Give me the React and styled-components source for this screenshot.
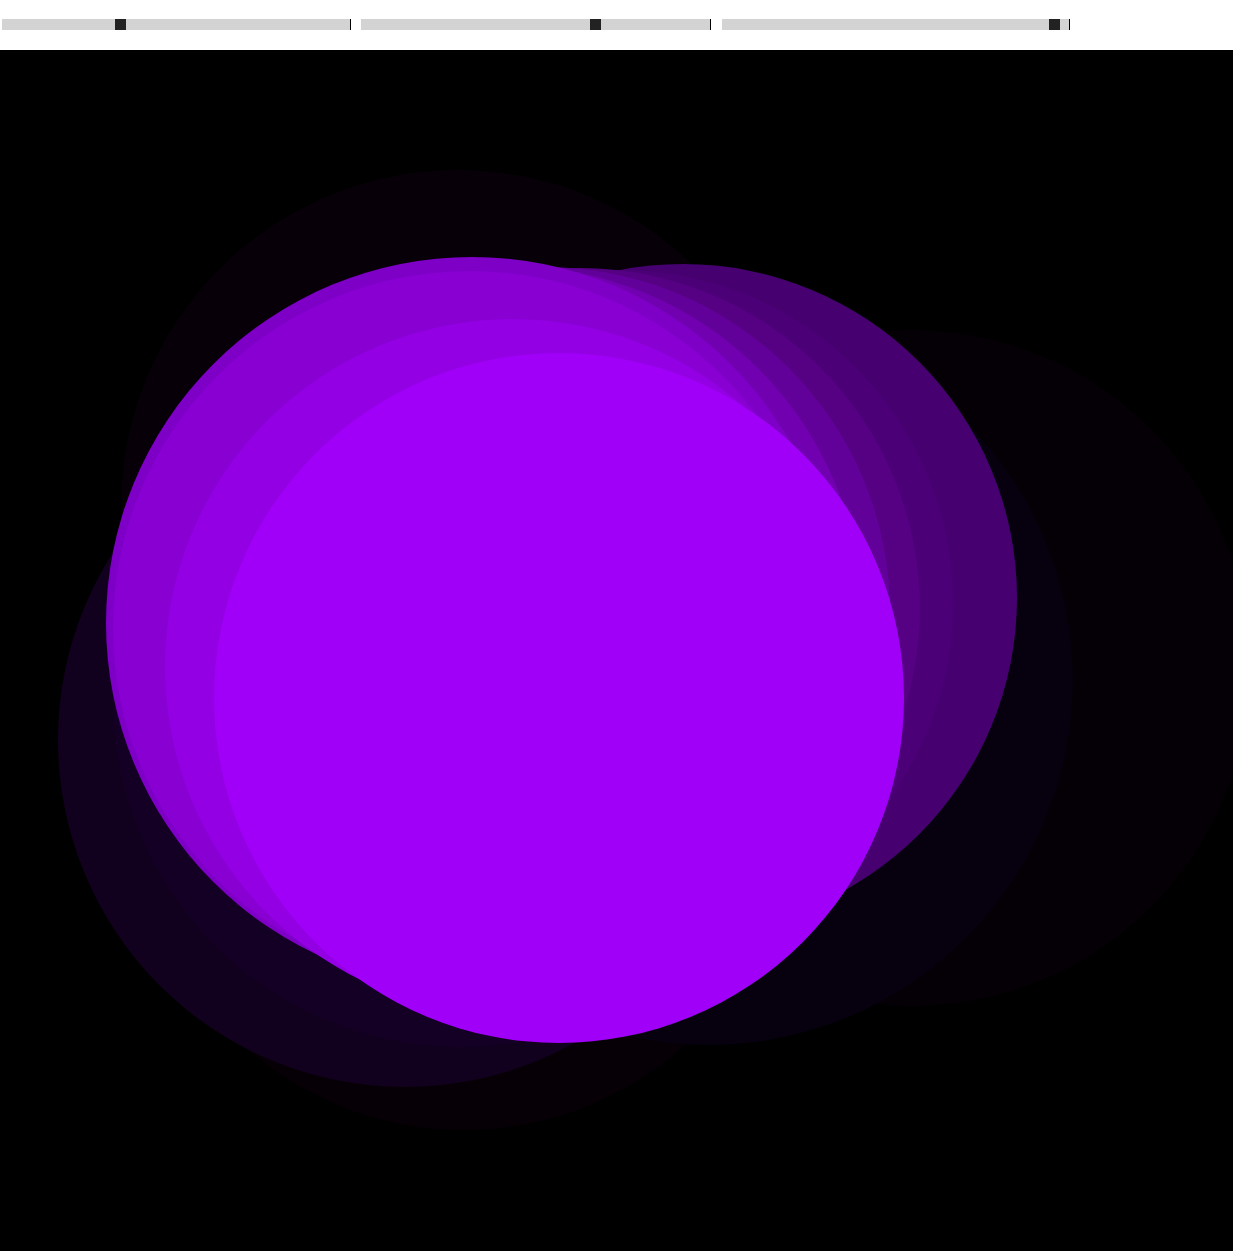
import React from 'react';
import styled, {createGlobalStyle} from 'styled-components';

const GlobalStyle = createGlobalStyle`
  html, body {
    margin: 0;
    padding: 0;
    background: #fff;
    font-family: "Liberation Sans", Arial, sans-serif;
  }
`;

const Page = styled.div`
  display: flex;
  flex-flow: column nowrap;
  width: 1233px;
`;

const Controls = styled.div`
  display: flex;
  align-items: flex-start;
  height: 50px;
  padding: 19px 0 0 2px;
  box-sizing: border-box;
  background: #fff;
`;

const SliderWrap = styled.div`
  display: flex;
  align-items: stretch;
  height: 11px;
  margin-right: ${props => props.gap}px;
`;

const Track = styled.div`
  position: relative;
  width: ${props => props.width}px;
  height: 11px;
  background: #d3d3d3;
`;

const Thumb = styled.div`
  position: absolute;
  top: 0;
  width: 11px;
  height: 11px;
  background: #222;
`;

const EndMark = styled.div`
  width: 1px;
  background: #000;
`;

const Stage = styled.div`
  width: 1233px;
  height: 1201px;
  background: #000;
  overflow: hidden;
  svg {
    display: block;
  }
`;

const sliders = [
  {width: 348, pos: 113, gap: 10},
  {width: 349, pos: 229, gap: 11},
  {width: 347, pos: 327, gap: 0},
];

// back to front; coords relative to the canvas (page y - 50)
const blobs = [
  {cx: 912, cy: 618, r: 338, fill: '#050005'},
  {cx: 464, cy: 750, r: 330, fill: '#060006'},
  {cx: 458, cy: 457, r: 337, fill: '#070008'},
  {cx: 708, cy: 630, r: 365, fill: '#06000f'},
  {cx: 405, cy: 690, r: 347, fill: '#12001f'},
  {cx: 460, cy: 650, r: 347, fill: '#140024'},
  {cx: 683, cy: 548, r: 334, fill: '#460070'},
  {cx: 620, cy: 553, r: 333, fill: '#4c0077'},
  {cx: 580, cy: 558, r: 340, fill: '#560084'},
  {cx: 545, cy: 562, r: 345, fill: '#62009a'},
  {cx: 510, cy: 568, r: 352, fill: '#7000b0'},
  {cx: 472, cy: 573, r: 366, fill: '#7e00c6'},
  {cx: 470, cy: 578, r: 357, fill: '#8800d2'},
  {cx: 513, cy: 617, r: 348, fill: '#9300e4'},
  {cx: 559, cy: 648, r: 345, fill: '#a100f8'},
];

const Slider = ({width, pos, gap}) => (
  <SliderWrap gap={gap}>
    <Track width={width}>
      <Thumb style={{left: pos}} />
    </Track>
    <EndMark />
  </SliderWrap>
);

const App = () => {
  return (
    <Page>
      <GlobalStyle />
      <Controls>
        {sliders.map((s, i) => <Slider key={i} {...s} />)}
      </Controls>
      <Stage>
        <svg width="1233" height="1201" viewBox="0 0 1233 1201">
          {blobs.map((b, i) => (
            <circle key={i} cx={b.cx} cy={b.cy} r={b.r} fill={b.fill} />
          ))}
        </svg>
      </Stage>
    </Page>
  );
};

export default App;
